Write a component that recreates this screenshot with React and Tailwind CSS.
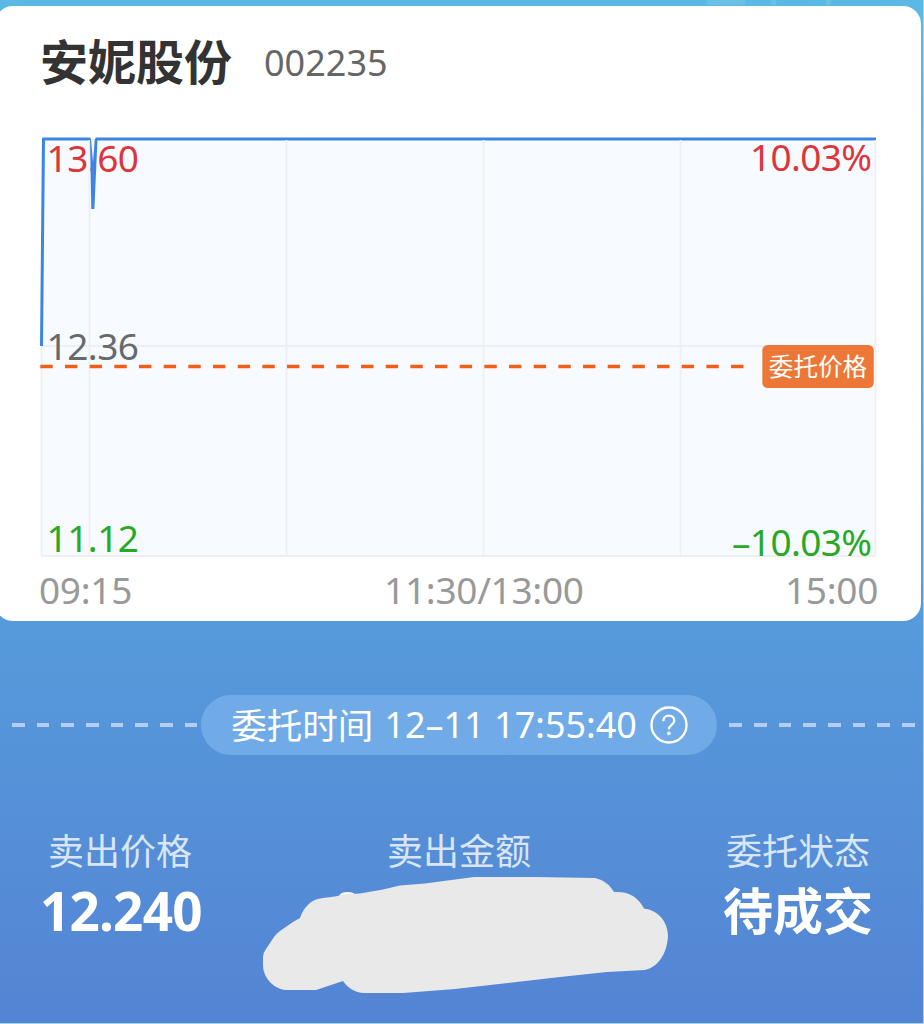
import React from "react";

const gridX = [89.5, 286.5, 483.5, 680.5, 875.5];

const PriceChart = () => (
  <svg width="924" height="430" viewBox="0 130 924 430" className="block overflow-visible">
    <rect x="41" y="139" width="835" height="417" fill="#f7fbff" />
    <g stroke="#efeff3" strokeWidth="2">
      <line x1="41" y1="346" x2="876" y2="346" />
      <line x1="41" y1="556" x2="876" y2="556" />
    </g>
    <path d="M41.5 346L43.5 139H90.5M95.5 139H876" fill="none" stroke="#3d85e3" strokeWidth="3" strokeLinejoin="round" />
    <g stroke="#efeff3" strokeWidth="1.8">
      {gridX.map((x) => (
        <line key={x} x1={x} y1="140" x2={x} y2="555" />
      ))}
      <line x1="41.5" y1="347" x2="41.5" y2="556" />
    </g>
    <g fontSize="37">
      <text x="46.5" y="172" textLength="92.5" fill="#dd3539">13.60</text>
      <text x="46.5" y="360" textLength="92.5" fill="#666a6d">12.36</text>
      <text x="46.5" y="552" textLength="92.5" fill="#27a925">11.12</text>
      <text x="750" y="171" textLength="122" fill="#dd3539">10.03%</text>
      <text x="732" y="556" textLength="140" fill="#27a925">–10.03%</text>
    </g>
    <path d="M90 139L91.3 209H94.4L97.5 139H94.8L93 162L91 139Z" fill="#3d85e3" />
    <line x1="40.3" y1="366.5" x2="746" y2="366.5" stroke="#f25d18" strokeWidth="3.4" strokeDasharray="12.4 12.27" />
    <rect x="762.3" y="345" width="111.5" height="43" rx="5.5" fill="#ed7737" />
    <text x="818" y="375.5" fontSize="24.6" fill="#fff" textAnchor="middle">委托价格</text>
  </svg>
);

const Dashes = () => (
  <div className="flex gap-[12.2px]">
    {[...Array(8)].map((_, i) => (
      <span key={i} className="h-[3.5px] w-[12.5px] bg-[#b2cdef]" />
    ))}
  </div>
);

const HelpIcon = () => (
  <svg width="38" height="38" viewBox="0 0 38 38" fill="none" stroke="#fff">
    <circle cx="19" cy="19" r="17.5" strokeWidth="2.3" />
    <path d="M13.3 15.2c0-3.4 2.2-5.6 5.5-5.6s5.5 2 5.5 5c0 4.2-5.4 4.4-5.4 8.6" strokeWidth="2.3" />
    <circle cx="18.9" cy="27.3" r="1.9" fill="#fff" stroke="none" />
  </svg>
);

const HiddenAmount = () => (
  <svg width="406" height="118" viewBox="262 876 406 118" className="block">
    <ellipse cx="347.5" cy="895.5" rx="8" ry="3.5" fill="#fff" />
    <path
      fill="#e9e9e9"
      d="M263 957Q263 953 266 949L274 937Q276 934 280 931L293 922L300 918C304 906 312 899 323 898L335 896.5L345 894.5L360 893.5L383 889.5L400 885.5L425 883.5L474 877H535L595 878C604 880 610 885 614 892C629 891 638 897 644 908.5C658 910 668 922 668 936C667 954 658 967 645 970L607 972L560 977L455 989L403 993H363C354 992 348 988 343 981L316 990H286C273 989 263 977 263 965Z"
    />
  </svg>
);

const App = () => {
  return (
    <div className="h-[1024px] w-[924px] overflow-hidden border-r border-b border-[#a9cff3] bg-linear-to-b from-[#5bb9e5] via-[#569bdb] via-60% to-[#5484d4] font-['Noto_Sans','Noto_Sans_CJK_SC',sans-serif]">
      <div className="flex h-[6px] justify-end pr-[92px]">
        <span className="h-[5px] w-[38px] bg-white/10" />
        <span className="ml-[26px] h-[5px] w-[5px] bg-white/10" />
        <span className="ml-[50px] h-[5px] w-[5px] bg-white/10" />
      </div>

      <div className="-ml-[5px] h-[614.5px] w-[926px] overflow-hidden rounded-[18px] bg-white pl-[5px]">
        <div className="flex h-[124px] items-start pt-[27px] pl-[40px]">
          <h1 className="-mt-px text-[48px] leading-[60px] font-bold text-[#333]">安妮股份</h1>
          <span className="ml-[32px] text-[36px] leading-[60px] text-[#666]">002235</span>
        </div>
        <PriceChart />
        <div className="flex w-[878px] pt-[5px] pl-[39px] text-[37px] leading-[50px] tracking-[-0.3px] text-[#999]">
          <span>09:15</span>
          <span className="ml-[252px]">11:30/13:00</span>
          <span className="ml-auto">15:00</span>
        </div>
      </div>

      <div className="mt-[74.5px] flex items-center pl-[12px]">
        <Dashes />
        <div className="mr-[12px] ml-[4px] flex h-[60px] w-[516px] items-center rounded-full bg-[#70abe8] pl-[30px] leading-[60px] text-white">
          <span className="text-[35.5px]">委托时间</span>
          <span className="ml-[11px] text-[36px] whitespace-nowrap">12–11 17:55:40</span>
          <span className="ml-[13px]">
            <HelpIcon />
          </span>
        </div>
        <Dashes />
      </div>

      <div className="mt-[71px] flex pl-[40px] text-white">
        <div className="w-[170px]">
          <p className="pl-[8px] text-[36px] leading-[52px] text-[#d9e6f8]">卖出价格</p>
          <p className="mt-[1px] text-[53px] leading-[64px] font-bold tracking-[-0.8px]">12.240</p>
        </div>
        <div className="ml-[52px] flex w-[406px] flex-col items-center">
          <p className="pr-[12px] text-[36px] leading-[52px] text-[#d9e6f8]">卖出金额</p>
          <div className="-mt-[2px]">
            <HiddenAmount />
          </div>
        </div>
        <div className="ml-[55px] w-[152px]">
          <p className="pl-[3px] text-[36px] leading-[52px] text-[#d9e6f8]">委托状态</p>
          <p className="mt-[1px] text-[50px] leading-[64px] font-bold whitespace-nowrap">待成交</p>
        </div>
      </div>
    </div>
  );
};

export default App;
